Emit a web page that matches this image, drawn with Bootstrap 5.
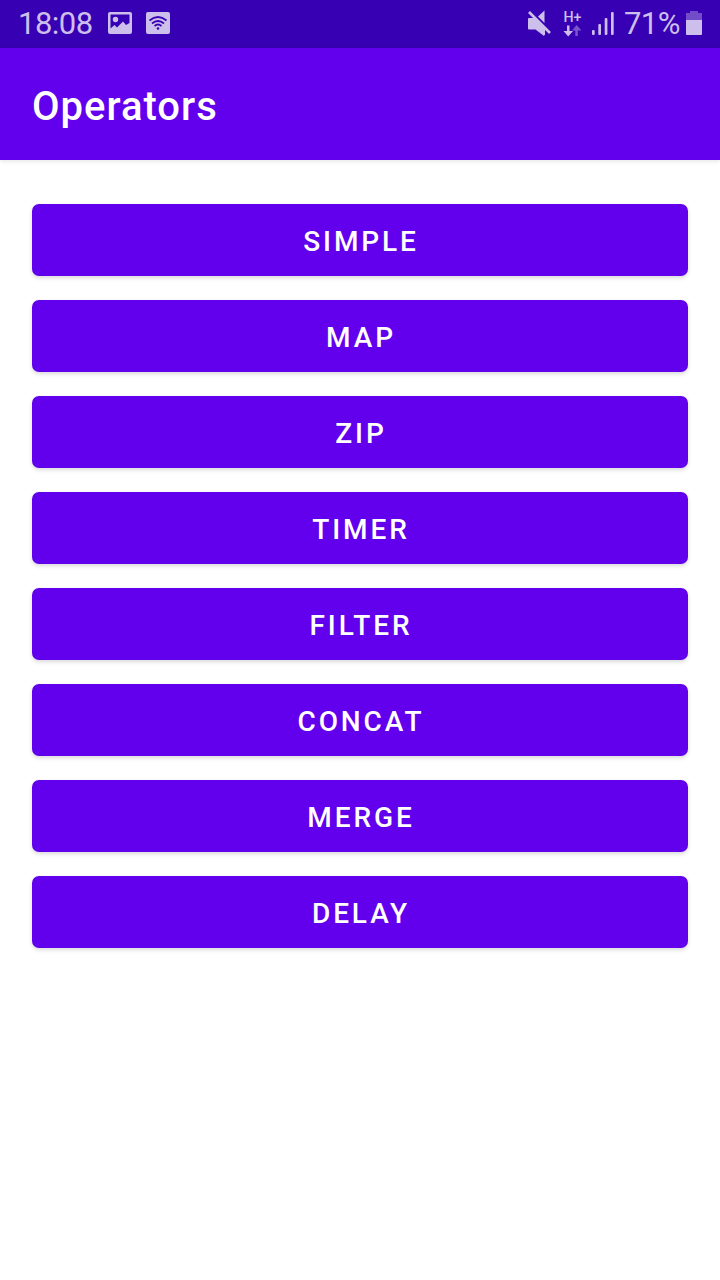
<!DOCTYPE html>
<html lang="en">
<head>
<meta charset="utf-8">
<meta name="viewport" content="width=device-width, initial-scale=1">
<title>Operators</title>
<link rel="stylesheet" href="https://cdn.jsdelivr.net/npm/bootstrap@5.3.0/dist/css/bootstrap.min.css">
<style>
body { font-family: Roboto, "Liberation Sans", sans-serif; background: #fff; }
.status-bar { height: 48px; background: #3700b3; color: #cdbfec; font-size: 31px; line-height: 48px; padding: 0 16px 0 18px; }
.status-bar svg { display: block; flex: none; }
.status-icons { gap: 14px; }
.clock { width: 76px; letter-spacing: -.5px; }
.battery-level { width: 68px; padding-left: 6px; letter-spacing: -.6px; }
.network-type { font: 500 14px Roboto, sans-serif; }
.app-bar { height: 112px; background: #6200ee; padding: 6px 32px 0; box-shadow: 0 1px 5px rgba(0,0,0,.12); }
.app-title { font-size: 40px; font-weight: 500; letter-spacing: 1px; line-height: 1; }
.operators { padding: 44px 32px; gap: 24px; }
.btn-operator {
  --bs-btn-color: #fff; --bs-btn-bg: #6200ee; --bs-btn-hover-color: #fff; --bs-btn-hover-bg: #6e16f0;
  --bs-btn-active-color: #fff; --bs-btn-active-bg: #5300ca; --bs-btn-border-width: 0;
  --bs-btn-border-radius: 7px; --bs-btn-font-size: 28px; --bs-btn-font-weight: 500;
  --bs-btn-line-height: 72px; --bs-btn-padding-y: 0;
  height: 72px; padding: 2px 0 0 2px; letter-spacing: 2.9px; box-shadow: 0 2px 4px rgba(0,0,0,.15);
}
</style>
</head>
<body>
<header>
  <div class="status-bar d-flex align-items-center justify-content-between">
    <div class="status-icons d-flex align-items-center">
      <span class="clock">18:08</span>
      <svg width="24" height="24" viewBox="0 0 24 24" fill="currentColor"><path fill-rule="evenodd" d="M2 0H22Q24 0 24 2V20Q24 22 22 22H2Q0 22 0 20V2Q0 0 2 0ZM2.500 2.500V16.500L6.500 13L9 15.500L15 9.500L18 13L21.500 11V2.500Z"/><circle cx="7.500" cy="7.500" r="2.700"/></svg>
      <svg width="24" height="24" viewBox="0 0 24 24"><rect width="24" height="22" rx="2" fill="currentColor"/><g fill="none" stroke="#3700b3" stroke-width="1.700"><path d="M3.500 8.500Q12 1.500 20.500 8.500M6 11.500Q12 6.500 18 11.500M8.500 14Q12 11 15.500 14"/></g><circle cx="12" cy="16.500" r="1.300" fill="#3700b3"/></svg>
    </div>
    <div class="d-flex align-items-center">
      <svg width="98" height="40" viewBox="520 4 98 40" fill="currentColor">
        <path d="M529 18H534L545 29V35.500L536.500 29.500H529Q528 29.500 528 28.500V19Q528 18 529 18ZM538 16.500L544.500 10.500V23Z"/><path d="M529 12L550 33" stroke="currentColor" stroke-width="2.600"/><path d="M539 28L544 33V36L535.500 29.500Z"/>
        <text class="network-type" x="563.500" y="22" textLength="18" lengthAdjust="spacingAndGlyphs">H+</text>
        <path d="M567 25.500H569.500V31H573L568.200 36.500L563.500 31H567Z"/>
        <path d="M575.300 36H577.800V30.500H581.500L576.600 25L572 30.500H575.300Z" opacity=".45"/>
        <rect x="592" y="30" width="2.700" height="5" rx="1"/><rect x="598.300" y="24" width="2.700" height="11" rx="1"/><rect x="604.700" y="18" width="2.700" height="17" rx="1"/><rect x="611" y="12" width="2.700" height="23" rx="1"/>
      </svg>
      <span class="battery-level">71%</span>
      <svg width="18" height="26" viewBox="686 11 18 26" fill="currentColor"><path opacity=".4" d="M690 11H698V13H702V20H686V13H690Z"/><path d="M686 20H702V34Q702 35 701 35H687Q686 35 686 34Z"/></svg>
    </div>
  </div>
  <nav class="app-bar d-flex align-items-center">
    <h1 class="app-title text-white mb-0">Operators</h1>
  </nav>
</header>
<main class="operators d-grid">
  <button type="button" class="btn btn-operator">SIMPLE</button>
  <button type="button" class="btn btn-operator">MAP</button>
  <button type="button" class="btn btn-operator">ZIP</button>
  <button type="button" class="btn btn-operator">TIMER</button>
  <button type="button" class="btn btn-operator">FILTER</button>
  <button type="button" class="btn btn-operator">CONCAT</button>
  <button type="button" class="btn btn-operator">MERGE</button>
  <button type="button" class="btn btn-operator">DELAY</button>
</main>
<script src="https://cdn.jsdelivr.net/npm/bootstrap@5.3.0/dist/js/bootstrap.bundle.min.js"></script>
</body>
</html>
